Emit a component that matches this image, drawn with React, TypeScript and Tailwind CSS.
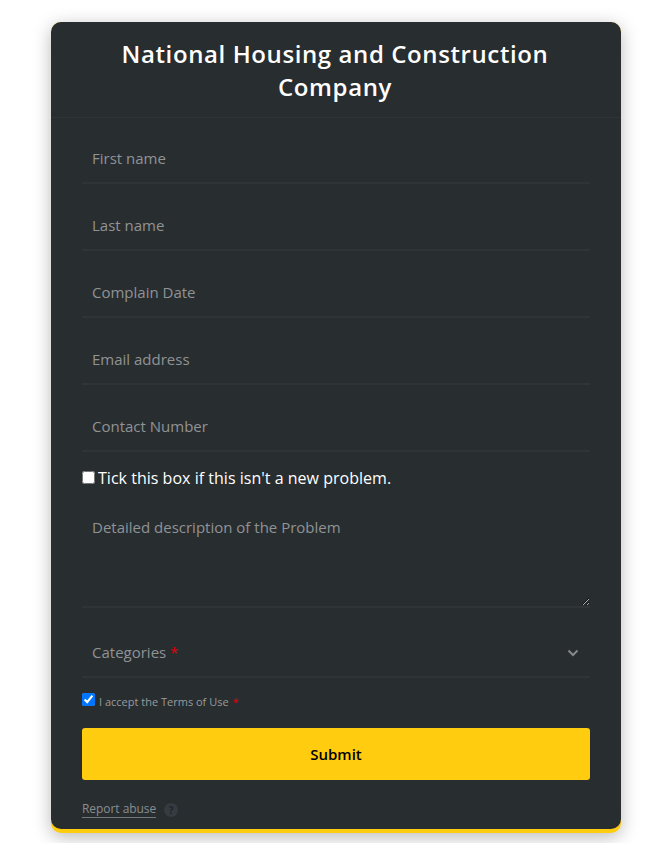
const fields = ["First name", "Last name", "Complain Date", "Email address", "Contact Number"];

const Field = ({ placeholder }: { placeholder: string }) => {
  return (
    <div className="h-[67px] border-b-2 border-[#2f3437] flex items-end">
      <input
        type="text"
        placeholder={placeholder}
        className="w-full h-[50px] pt-[2px] px-[10px] bg-transparent text-[15px] text-white outline-none placeholder:text-[#909395]"
      />
    </div>
  );
};

const App = () => {
  return (
    <div className="w-[645px] h-[843px] bg-white overflow-hidden pt-[22px] pl-[51px] font-['Open_Sans',sans-serif]">
      <div className="w-[570px] h-[811px] rounded-[10px] bg-[#ffcc0f] shadow-[0_4px_18px_rgba(0,0,0,0.28)]">
        <div className="h-[807px] rounded-[10px] bg-[#282d30] flex flex-col">
          <div className="h-[96px] border-b border-[#2f3437] pl-[39px] pr-[41px] pt-[15px] text-center text-[24px] leading-[33px] font-semibold tracking-[0.6px] text-white">
            National Housing and Construction Company
          </div>
          <form className="px-[31px]">
            <div className="-mt-[1px]">
              {fields.map((f) => (
                <Field key={f} placeholder={f} />
              ))}
            </div>
            <label className="h-[53px] pb-[2px] flex items-center text-[16px] tracking-[0.02px] text-white">
              <input type="checkbox" className="w-[13px] h-[13px] mr-[3px]" />
              Tick this box if this isn't a new problem.
            </label>
            <div className="h-[103px] border-b-2 border-[#2f3437]">
              <textarea
                placeholder="Detailed description of the Problem"
                className="block w-full h-[101px] px-[10px] pt-[12px] bg-transparent text-[15px] leading-[20px] text-white outline-none placeholder:text-[#909395]"
              />
            </div>
            <div className="h-[70px] border-b-2 border-[#2f3437] flex items-end justify-between pb-[14px] pl-[10px] pr-[11px]">
              <span className="text-[15px] leading-[20px] text-[#909395]">
                Categories <span className="text-[#e0000a]">*</span>
              </span>
              <svg width="12" height="8" viewBox="0 0 12 8" className="mb-[5px]" fill="none">
                <path d="M1.5 1.5 6 6l4.5-4.5" stroke="#85888b" strokeWidth="2" />
              </svg>
            </div>
            <label className="h-[50px] pb-[2px] flex items-center text-[11px] text-[#999c9e]">
              <input type="checkbox" defaultChecked className="w-[13px] h-[13px] mr-[4px] -mt-[5px]" />
              I accept the Terms of Use
              <span className="text-[#e0000a] ml-[4px]">*</span>
            </label>
            <button
              type="button"
              className="w-full h-[52px] rounded-[3px] bg-[#ffcc0f] text-[15px] font-[550] text-black"
            >
              Submit
            </button>
            <div className="mt-[21px] flex items-center gap-[8px]">
              <a className="text-[12px] leading-[16px] tracking-[-0.05px] text-[#8a8d90] border-b border-[#75787b]">Report abuse</a>
              <span className="w-[14px] h-[14px] rounded-full bg-[#363b42] text-[#20242a] text-[10px] leading-[14px] font-bold text-center">
                ?
              </span>
            </div>
          </form>
        </div>
      </div>
    </div>
  );
};

export default App;
